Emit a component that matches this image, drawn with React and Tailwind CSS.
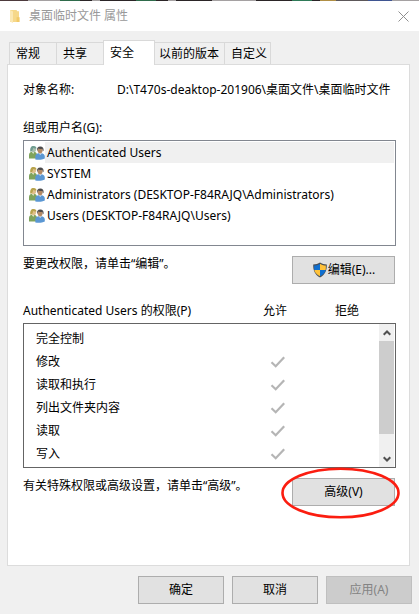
import { useState } from 'react'

const TABS = [
  { id: 'general', label: '常规', className: 'w-[47px] h-[22px] border-l pl-1.5' },
  { id: 'sharing', label: '共享', className: 'w-[47px] h-[22px] border-l pl-1.5' },
  { id: 'security', label: '安全', className: 'w-[52px] h-[25px] border-x pl-1.5 bg-white -mb-px' },
  { id: 'versions', label: '以前的版本', className: 'w-[70px] h-[22px] border-r pl-1' },
  { id: 'custom', label: '自定义', className: 'w-[46px] h-[22px] border-r pl-1.5' },
]

const GROUPS = [
  { name: 'Authenticated Users', hair: '#6f9c90', skin: '#a9bfae' },
  { name: 'SYSTEM', hair: '#b7a34c', skin: '#e0c08a' },
  { name: 'Administrators (DESKTOP-F84RAJQ\\Administrators)', hair: '#b7a34c', skin: '#e0c08a' },
  { name: 'Users (DESKTOP-F84RAJQ\\Users)', hair: '#b7a34c', skin: '#e0c08a' },
]

const PERMISSIONS = [
  { label: '完全控制', allow: false },
  { label: '修改', allow: true },
  { label: '读取和执行', allow: true },
  { label: '列出文件夹内容', allow: true },
  { label: '读取', allow: true },
  { label: '写入', allow: true },
]

// sliver of the desktop above the window
function DesktopEdge() {
  return (
    <div className="flex h-px bg-[#2b2527]">
      <div className="w-7 bg-[#4d3a3d]" />
      <div className="w-8 bg-[#a5a1a2]" />
      <div className="w-5 bg-[#2f6b4b]" />
      <div className="w-3" />
      <div className="w-2 bg-[#a5a1a2]" />
      <div className="w-9" />
      <div className="w-5 bg-[#2f6b4b]" />
      <div className="w-3" />
      <div className="w-2 bg-[#a5a1a2]" />
      <div className="w-9" />
      <div className="w-11 bg-[#a5a1a2]" />
      <div className="w-9" />
      <div className="w-5 bg-[#2f7a58]" />
      <div className="w-2" />
      <div className="w-4 bg-[#b08f45]" />
      <div className="w-8 bg-[#5c5759]" />
      <div className="w-6 bg-[#3f5591]" />
      <div className="flex-1 bg-[#a5a1a2]" />
    </div>
  )
}

function FolderIcon() {
  return (
    <svg className="w-3 h-[14px]" viewBox="0 0 12 14" aria-hidden="true">
      <path d="M1 1h6.500l.8 1.200H10V13H1z" fill="#f6d88a" />
      <path d="M1 1l3 1.600V14L1 12.600z" fill="#fbe8b4" />
      <path d="M7.600 8.200H10.600V13H7.600z" fill="#f2ca68" />
    </svg>
  )
}

function UsersIcon({ hair, skin }) {
  return (
    <svg className="w-4 h-4 shrink-0" viewBox="0 0 16 16" aria-hidden="true">
      <path d="M0 13.500V10c0-2.200 1.600-3.500 4-3.500s4 1.300 4 3.500v3.500z" fill="#7fa35c" />
      <path d="M2.500 6.500h3L4.300 9z" fill="#dfe8d2" />
      <ellipse cx="4.600" cy="4.300" rx="2.500" ry="3" fill={skin} />
      <path d="M1.300 6.800C.8 2.800 2 1 4.500 1c2 0 3 1 3 2.500-2 .2-3-.2-3.500-.4C4 5 3.300 6.500 1.300 6.800z" fill={hair} />
      <path d="M6.300 14.500V11.500c0-2.200 1.800-3.500 4.700-3.500s4.800 1.300 4.800 3.500v2c-2.500 1.300-6 1.400-9.500 1z" fill="#5b97d3" />
      <path d="M9.500 8h3.400L11.200 10z" fill="#d7e6f5" />
      <ellipse cx="11.100" cy="5.300" rx="2.500" ry="3.100" fill="#b38a66" />
      <path d="M8 6C7.600 3 8.700 1.500 11.300 1.500c2.500 0 3.700 1.500 3.200 4.700-.8-.4-1-1.500-1.200-2.400-1.800.4-3.300.2-4.300-.2C8.800 4.500 8.600 5.500 8 6z" fill="#4b4a4b" />
    </svg>
  )
}

function ShieldIcon() {
  return (
    <svg className="w-4 h-4" viewBox="0 0 16 16" aria-hidden="true">
      <path d="M8 .5C6.200 1.800 3.800 2.500 1.200 2.500c-.2 6 1.800 10.300 6.800 13 5-2.700 7-7 6.800-13C12.200 2.500 9.800 1.800 8 .5z" fill="#4a4f55" />
      <path d="M8 1.800V8H2.300c-.2-1.300-.2-2.800-.1-4.400C4.500 3.500 6.500 2.900 8 1.800z" fill="#0f6fd0" />
      <path d="M8 1.800V8h5.700c.2-1.300.2-2.800.1-4.400C11.500 3.500 9.500 2.900 8 1.800z" fill="#ffc23a" />
      <path d="M8 14.200V8H2.300C2.900 10.800 4.800 12.700 8 14.200z" fill="#ffc23a" />
      <path d="M8 14.200V8h5.700C13.100 10.800 11.200 12.700 8 14.200z" fill="#0f6fd0" />
    </svg>
  )
}

function AllowMark() {
  return (
    <svg className="w-4 h-3 mx-auto" viewBox="0 0 16 12" role="img" aria-label="允许">
      <path d="M1.500 6.200L5.700 10.300L14.200 1.300" fill="none" stroke="#b5b5b5" strokeWidth="2.200" />
    </svg>
  )
}

function ScrollArrow({ down }) {
  return (
    <svg className="w-2 h-[6px]" viewBox="0 0 8 6" aria-hidden="true">
      <path
        d={down ? 'M.7 1.200L4 4.500L7.300 1.200' : 'M.7 4.800L4 1.500L7.300 4.800'}
        fill="none"
        stroke="#505050"
        strokeWidth="2"
      />
    </svg>
  )
}

function Button({ className = '', children, ...props }) {
  return (
    <button
      type="button"
      className={`flex h-7 items-center justify-center border border-[#adadad] bg-[#e1e1e1] disabled:border-[#bfbfbf] disabled:bg-[#cccccc] disabled:text-[#838383] ${className}`}
      {...props}
    >
      {children}
    </button>
  )
}

export default function App() {
  const [selected, setSelected] = useState(GROUPS[0].name)

  return (
    <div className="bg-[#f0f0f0] text-black text-[12px] leading-4 font-['Noto_Sans','Noto_Sans_CJK_SC',sans-serif]">
      <DesktopEdge />
      <header className="flex h-[30px] items-center bg-white pl-[9px] pr-2.5">
        <FolderIcon />
        <h1 className="ml-2 flex-1 text-[#999999]">桌面临时文件 属性</h1>
        <button type="button" aria-label="关闭">
          <svg className="w-[11px] h-[11px]" viewBox="0 0 11 11" aria-hidden="true">
            <path d="M.5 .5L10.500 10.500M10.500 .5L.5 10.500" stroke="#8f8f8f" strokeWidth="1" />
          </svg>
        </button>
      </header>

      <main className="pl-[7px] pr-[9px] pt-[9px]">
        <div role="tablist" className="flex items-end pl-0.5">
          {TABS.map(tab => (
            <button
              key={tab.id}
              type="button"
              role="tab"
              aria-selected={tab.id === 'security'}
              className={`shrink-0 border-t border-[#d9d9d9] text-left whitespace-nowrap ${tab.className}`}
            >
              {tab.label}
            </button>
          ))}
        </div>

        <section role="tabpanel" className="border border-[#dcdcdc] bg-white pl-[15px] pr-[13px] pt-[17px] pb-[59px]">
          <div className="flex">
            <label htmlFor="object-name" className="w-[94px] shrink-0">对象名称:</label>
            <input
              id="object-name"
              readOnly
              value="D:\T470s-deaktop-201906\桌面文件\桌面临时文件"
              className="h-4 min-w-0 flex-1 outline-none"
            />
          </div>

          <h2 id="groups-label" className="mt-[22px]">组或用户名(G):</h2>
          <ul
            role="listbox"
            aria-labelledby="groups-label"
            className="mt-1 h-[106px] border border-[#828790] px-px pt-px"
          >
            {GROUPS.map(group => (
              <li
                key={group.name}
                role="option"
                aria-selected={group.name === selected}
                onClick={() => setSelected(group.name)}
                className="flex h-[21px] items-center pl-1"
              >
                <UsersIcon hair={group.hair} skin={group.skin} />
                <span className={`flex h-full flex-1 items-center pl-0.5 ${group.name === selected ? 'bg-[#f0f0f0]' : ''}`}>
                  {group.name}
                </span>
              </li>
            ))}
          </ul>

          <div className="mt-2.5 flex items-start justify-between pr-px">
            <p>要更改权限，请单击“编辑”。</p>
            <Button className="w-[103px]">
              <ShieldIcon />
              编辑(E)...
            </Button>
          </div>

          <div className="mt-[19px] flex">
            <h2 id="permissions-label" className="flex-1 whitespace-nowrap">{selected.split(' (')[0]} 的权限(P)</h2>
            <span className="w-[72px]">允许</span>
            <span className="w-[61px]">拒绝</span>
          </div>
          <div className="mt-1 flex border border-[#646464]">
            <div className="flex-1 pt-[3px] pb-0.5 pl-3">
              <table aria-labelledby="permissions-label" className="w-full">
                <tbody>
                  {PERMISSIONS.map(permission => (
                    <tr key={permission.label} className="h-[23px]">
                      <th scope="row" className="p-0 text-left font-normal">{permission.label}</th>
                      <td className="w-[72px] p-0">{permission.allow && <AllowMark />}</td>
                      <td className="w-[65px] p-0" />
                    </tr>
                  ))}
                </tbody>
              </table>
            </div>
            <div className="mr-px flex w-[15px] flex-col bg-[#f0f0f0]">
              <button type="button" aria-label="向上滚动" className="flex h-[17px] items-center justify-center">
                <ScrollArrow />
              </button>
              <div className="h-[93px] bg-[#cdcdcd]" />
              <button type="button" aria-label="向下滚动" className="mt-auto flex h-[17px] items-center justify-center">
                <ScrollArrow down />
              </button>
            </div>
          </div>

          <div className="mt-2.5 flex items-start justify-between pr-px">
            <p>有关特殊权限或高级设置，请单击“高级”。</p>
            <div className="relative">
              <Button className="w-[103px]">高级(V)</Button>
              <svg
                className="pointer-events-none absolute -left-3 -top-[11px] h-[52px] w-[120px]"
                viewBox="0 0 120 52"
                aria-hidden="true"
              >
                <ellipse cx="60.500" cy="26" rx="58" ry="24.300" fill="none" stroke="#fb1d10" strokeWidth="2.600" />
              </svg>
            </div>
          </div>
        </section>
      </main>

      <footer className="flex justify-end gap-2 pr-[7px] pt-2.5 pb-2.5">
        <Button className="w-[86px]">确定</Button>
        <Button className="w-[86px]">取消</Button>
        <Button className="w-[86px]" disabled>应用(A)</Button>
      </footer>
    </div>
  )
}
